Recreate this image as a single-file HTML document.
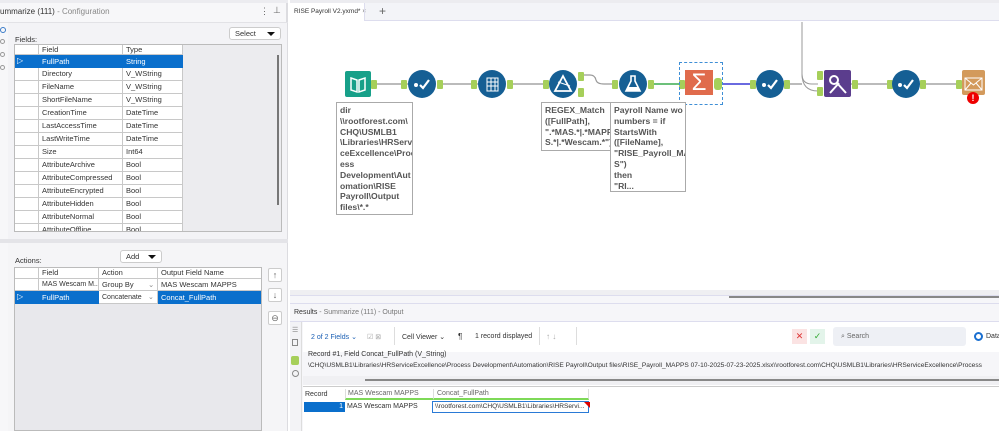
<!DOCTYPE html>
<html><head><meta charset="utf-8"><style>
*{box-sizing:border-box;margin:0;padding:0}
body{width:999px;height:431px;overflow:hidden;background:#fff;font-family:"Liberation Sans",sans-serif;font-size:8px;color:#333;position:relative}
.a{position:absolute}
.cell{position:absolute;border-right:1px solid #c8c8c8;border-bottom:1px solid #c8c8c8;padding-left:3px;line-height:12px;font-size:7.5px;white-space:nowrap;overflow:hidden}
.note{position:absolute;border:1px solid #aaa;background:#fff;color:#555;font-weight:bold;font-size:8.6px;line-height:10.8px;padding:2px 3px;overflow:hidden;white-space:nowrap}
.dd{position:absolute;border:1px solid #ccc;border-radius:3px;background:#fff;font-size:7.5px;padding-left:5px;line-height:12px}
.dd:after{content:"";position:absolute;right:5px;top:4px;border:4px solid transparent;border-top:4px solid #111}
.btn{position:absolute;width:14px;height:14px;border:1px solid #ccc;border-radius:2px;background:#fff;font-size:9px;text-align:center;line-height:12px;color:#666}
.conn{position:absolute;width:6px;height:9px;background:#a6cf5a;border-radius:1px}
.line{position:absolute;height:2px;background:#bbb}
.circ{position:absolute;width:28px;height:28px;border-radius:50%;background:#155f94}
</style></head><body>
<div class="a" style="left:0;top:0;width:288px;height:431px;background:#f7f7f9;border-right:2px solid #dcdce0"></div>
<div class="a" style="left:0;top:0;width:288px;height:3px;background:#ececf0"></div>
<div class="a" style="left:0;top:7px;font-size:8px;color:#333">ummarize (111) <span style="color:#888">- Configuration</span></div>
<div class="a" style="left:260px;top:6px;color:#666;font-size:9px">⋮</div>
<div class="a" style="left:273px;top:5px;color:#666;font-size:9px">⊥</div>
<div class="a" style="left:0;top:22px;width:288px;height:1px;background:#e2e2e6"></div>
<div class="a" style="left:8px;top:23px;width:279px;height:216px;background:#f3f3f6"></div>
<div class="a" style="left:0;top:27px;width:6px;height:6px;border:1px solid #3a7bc8;border-radius:50%"></div>
<div class="a" style="left:0;top:39px;width:5px;height:5px;border:1px solid #999;border-radius:50%"></div>
<div class="a" style="left:0;top:52px;width:5px;height:5px;border:1px solid #999;border-radius:50%"></div>
<div class="a" style="left:0;top:65px;width:5px;height:5px;border:1px solid #999;border-radius:50%"></div>
<div class="a" style="left:15px;top:35px;font-size:7.5px">Fields:</div>
<div class="dd" style="left:229px;top:27px;width:52px;height:13px">Select</div>
<div class="a" style="left:14px;top:44px;width:268px;height:188px;background:#e6e6ea;border:1px solid #bbb;overflow:hidden">
<div class="a" style="left:168px;top:0;width:100px;height:188px;background:#ececef"></div>
<div class="a" style="left:262px;top:10px;width:2px;height:150px;background:#777"></div>
<div class="a" style="left:0;top:0;width:168px;height:188px;background:#fff"></div>
<div class="cell" style="left:0;top:0;width:24px;height:10px"></div>
<div class="cell" style="left:24px;top:0;width:84px;height:10px;line-height:9px">Field</div>
<div class="cell" style="left:108px;top:0;width:60px;height:10px;line-height:9px">Type</div>
<div class="a" style="left:0;top:10px;width:168px;height:13px;background:#0a6fcc"></div>
<div class="a" style="left:2px;top:11px;color:#fff;font-size:8px">▷</div>
<div class="a" style="left:27px;top:10px;color:#fff;line-height:13px;font-size:7.5px">FullPath</div>
<div class="a" style="left:111px;top:10px;color:#fff;line-height:13px;font-size:7.5px">String</div>
<div id="rows"></div>
</div>
<script>
var f=[["Directory","V_WString"],["FileName","V_WString"],["ShortFileName","V_WString"],["CreationTime","DateTime"],["LastAccessTime","DateTime"],["LastWriteTime","DateTime"],["Size","Int64"],["AttributeArchive","Bool"],["AttributeCompressed","Bool"],["AttributeEncrypted","Bool"],["AttributeHidden","Bool"],["AttributeNormal","Bool"],["AttributeOffline","Bool"]];
var h="";f.forEach(function(r,i){var t=23+i*13;h+='<div class="cell" style="left:0;top:'+t+'px;width:24px;height:13px"></div><div class="cell" style="left:24px;top:'+t+'px;width:84px;height:13px">'+r[0]+'</div><div class="cell" style="left:108px;top:'+t+'px;width:60px;height:13px">'+r[1]+'</div>';});
document.getElementById("rows").innerHTML=h;
</script>
<div class="a" style="left:0;top:239px;width:288px;height:4px;background:#e4e4e8"></div>
<div class="a" style="left:8px;top:243px;width:279px;height:188px;background:#f5f5f7"></div>
<div class="a" style="left:15px;top:256px;font-size:7.5px">Actions:</div>
<div class="dd" style="left:120px;top:250px;width:42px;height:13px">Add</div>
<div class="a" style="left:14px;top:267px;width:248px;height:164px;background:#e8e8ec;border:1px solid #bbb;overflow:hidden">
<div class="cell" style="left:0;top:0;width:24px;height:11px;background:#fff"></div>
<div class="cell" style="left:24px;top:0;width:60px;height:11px;background:#fff;line-height:10px">Field</div>
<div class="cell" style="left:84px;top:0;width:59px;height:11px;background:#fff;line-height:10px">Action</div>
<div class="cell" style="left:143px;top:0;width:104px;height:11px;background:#fff;line-height:10px">Output Field Name</div>
<div class="cell" style="left:0;top:11px;width:24px;height:12px;background:#fff"></div>
<div class="cell" style="left:24px;top:11px;width:60px;height:12px;background:#fff;font-size:7px">MAS Wescam M...</div>
<div class="cell" style="left:84px;top:11px;width:59px;height:12px;background:#fff">Group By <span style="position:absolute;left:49px;color:#888">⌄</span></div>
<div class="cell" style="left:143px;top:11px;width:104px;height:12px;background:#fff">MAS Wescam MAPPS</div>
<div class="a" style="left:0;top:23px;width:248px;height:13px;background:#0a6fcc"></div>
<div class="a" style="left:2px;top:24px;color:#fff">▷</div>
<div class="a" style="left:27px;top:23px;color:#fff;line-height:13px;font-size:7.5px">FullPath</div>
<div class="cell" style="left:84px;top:23px;width:59px;height:13px;background:#fff;line-height:13px;font-size:7px">Concatenate <span style="position:absolute;left:49px;color:#888">⌄</span></div>
<div class="a" style="left:146px;top:23px;color:#fff;line-height:13px;font-size:7.5px">Concat_FullPath</div>
</div>
<div class="btn" style="left:268px;top:268px">↑</div>
<div class="btn" style="left:268px;top:288px">↓</div>
<div class="btn" style="left:268px;top:311px">⊖</div>

<div class="a" style="left:290px;top:0;width:709px;height:3px;background:#ececf0"></div>
<div class="a" style="left:290px;top:3px;width:709px;height:18px;background:#f3f4f8;border-bottom:1px solid #dde"></div>
<div class="a" style="left:290px;top:3px;width:74px;height:19px;background:#fff;font-size:6.5px;padding:5px 0 0 4px;white-space:nowrap">RISE Payroll V2.yxmd* <span style="color:#666">×</span></div>
<div class="a" style="left:364px;top:3px;width:1px;height:18px;background:#dde"></div>
<div class="a" style="left:379px;top:4px;font-size:12px;color:#666">+</div>
<svg class="a" style="left:290px;top:22px" width="709" height="275">
<path d="M512 -22 L512 52 Q512 62 522 62 L528 62" fill="none" stroke="#999" stroke-width="1"/>
<path d="M512 52 Q512 69 528 69" fill="none" stroke="#999" stroke-width="1"/>
<path d="M294 53 L300 53 Q305 53 306 58 Q307 62 314 62 L322 62" fill="none" stroke="#999" stroke-width="1.2"/>
</svg>
<div class="line" style="left:372px;top:83px;width:40px"></div>
<div class="line" style="left:437px;top:83px;width:44px"></div>
<div class="line" style="left:507px;top:83px;width:44px"></div>
<div class="a" style="left:648px;top:83px;width:34px;height:2px;background:#6cc07a"></div>
<div class="a" style="left:723px;top:83px;width:34px;height:2px;background:#6a6ae0"></div>
<div class="line" style="left:784px;top:83px;width:18px"></div>
<div class="line" style="left:851px;top:83px;width:42px"></div>
<div class="line" style="left:919px;top:83px;width:44px"></div>
<div class="conn" style="left:371px;top:80px"></div><div class="conn" style="left:401px;top:80px"></div>
<div class="conn" style="left:437px;top:80px"></div><div class="conn" style="left:471px;top:80px"></div>
<div class="conn" style="left:507px;top:80px"></div><div class="conn" style="left:543px;top:80px"></div>
<div class="conn" style="left:578px;top:72px"></div><div class="conn" style="left:578px;top:88px"></div>
<div class="conn" style="left:612px;top:80px"></div><div class="conn" style="left:648px;top:80px"></div>
<div class="conn" style="left:679px;top:80px"></div><div class="conn" style="left:714px;top:78px;width:8px;height:12px;border-radius:3px"></div>
<div class="conn" style="left:750px;top:80px"></div><div class="conn" style="left:784px;top:80px"></div>
<div class="conn" style="left:817px;top:71px"></div><div class="conn" style="left:817px;top:87px"></div>
<div class="conn" style="left:852px;top:80px"></div><div class="conn" style="left:887px;top:80px"></div>
<div class="conn" style="left:920px;top:80px"></div><div class="conn" style="left:956px;top:80px"></div>
<div class="a" style="left:345px;top:71px;width:26px;height:26px;background:#17a089;border-radius:2px"></div>
<svg class="a" style="left:345px;top:71px" width="26" height="26"><path d="M6 7 L12 9 L12 21 L6 19Z M14 9 L20 7 L20 19 L14 21Z" fill="none" stroke="#fff" stroke-width="1.5"/></svg>
<div class="circ" style="left:408px;top:70px"></div>
<div class="circ" style="left:478px;top:70px"></div>
<div class="circ" style="left:549px;top:70px"></div>
<div class="circ" style="left:619px;top:70px"></div>
<div class="circ" style="left:756px;top:70px"></div>
<div class="circ" style="left:892px;top:70px"></div>
<svg class="a" style="left:408px;top:70px" width="28" height="28"><circle cx="8" cy="15" r="2" fill="#fff"/><path d="M12 15 L15 18 L21 10" stroke="#fff" stroke-width="2.2" fill="none"/></svg>
<svg class="a" style="left:756px;top:70px" width="28" height="28"><circle cx="8" cy="15" r="2" fill="#fff"/><path d="M12 15 L15 18 L21 10" stroke="#fff" stroke-width="2.2" fill="none"/></svg>
<svg class="a" style="left:892px;top:70px" width="28" height="28"><circle cx="8" cy="15" r="2" fill="#fff"/><path d="M12 15 L15 18 L21 10" stroke="#fff" stroke-width="2.2" fill="none"/></svg>
<svg class="a" style="left:478px;top:70px" width="28" height="28"><path d="M9 8 H20 V21 H9Z M9 12 H20 M9 16 H20 M13 8 V21 M17 8 V21" stroke="#fff" fill="none" stroke-width="1"/></svg>
<svg class="a" style="left:549px;top:70px" width="28" height="28"><path d="M14 6 L22 21 H6Z" stroke="#fff" fill="none" stroke-width="1.8"/><path d="M9 12 L21 16" stroke="#fff"/></svg>
<svg class="a" style="left:619px;top:70px" width="28" height="28"><path d="M12 6 H16 V11 L21 21 H7 L12 11Z" stroke="#fff" fill="none" stroke-width="1.6"/><path d="M9 17 H19 L21 21 H7Z" fill="#fff"/></svg>
<div class="a" style="left:679px;top:62px;width:44px;height:43px;border:1px dashed #3f8fd6"></div>
<div class="a" style="left:685px;top:70px;width:28px;height:25px;background:#e06b4c;color:#fff;font-size:24px;line-height:25px;text-align:center">Σ</div>
<div class="a" style="left:824px;top:70px;width:27px;height:27px;background:#5b3d8d;border-radius:2px"></div>
<svg class="a" style="left:824px;top:70px" width="27" height="27"><circle cx="10" cy="10" r="4" stroke="#fff" fill="none" stroke-width="2"/><path d="M13 13 L22 23 M6 23 L15 13" stroke="#fff" stroke-width="2"/></svg>
<div class="a" style="left:962px;top:70px;width:23px;height:25px;background:#d39a5c;border-radius:2px"></div>
<svg class="a" style="left:962px;top:70px" width="23" height="25"><path d="M3 8 H20 V20 H3Z M3 8 L11.5 15 L20 8 M3 20 L9 13 M20 20 L14 13" stroke="#fff" fill="none"/></svg>
<div class="a" style="left:967px;top:92px;width:12px;height:12px;border-radius:50%;background:#e00;color:#fff;font-weight:bold;font-size:9px;text-align:center;line-height:12px">!</div>
<div class="note" style="left:336px;top:102px;width:77px;height:113px">dir<br>\\rootforest.com\<br>CHQ\USMLB1<br>\Libraries\HRServi<br>ceExcellence\Proc<br>ess<br>Development\Aut<br>omation\RISE<br>Payroll\Output<br>files\*.*</div>
<div class="note" style="left:541px;top:102px;width:72px;height:49px">REGEX_Match<br>([FullPath],<br>".*MAS.*|.*MAPP<br>S.*|.*Wescam.*")</div>
<div class="note" style="left:610px;top:102px;width:76px;height:90px">Payroll Name wo<br>numbers = if<br>StartsWith<br>([FileName],<br>"RISE_Payroll_MA<br>S")<br>then<br>"RI...</div>

<div class="a" style="left:290px;top:290px;width:709px;height:141px;background:#f6f6f9"></div>
<div class="a" style="left:290px;top:290px;width:709px;height:6px;background:#efeff2;border-bottom:1px solid #dde"></div>
<div class="a" style="left:729px;top:296px;width:270px;height:2px;background:#888"></div>
<div class="a" style="left:290px;top:303px;width:709px;height:1px;background:#dde"></div>
<div class="a" style="left:294px;top:309px;font-size:7px;color:#333">Results <span style="color:#777">- Summarize (111) - Output</span></div>
<div class="a" style="left:290px;top:321px;width:709px;height:1px;background:#dde"></div>
<div class="a" style="left:290px;top:322px;width:12px;height:109px;background:#f3f3f6;border-right:1px solid #ddd"></div>
<div class="a" style="left:292px;top:326px;font-size:7px;color:#888">☰</div>
<div class="a" style="left:292px;top:339px;width:6px;height:7px;border:1px solid #888"></div>
<div class="a" style="left:291px;top:356px;width:8px;height:9px;background:#a6cf5a;border-radius:2px"></div>
<div class="a" style="left:292px;top:370px;width:7px;height:7px;border:1px solid #888;border-radius:50%"></div>
<div class="a" style="left:303px;top:322px;width:696px;height:30px;background:#fff"></div>
<div class="a" style="left:311px;top:333px;font-size:7px;color:#1a5fb4">2 of 2 Fields ⌄</div>
<div class="a" style="left:367px;top:333px;font-size:7px;color:#aaa">☑ ⊠</div>
<div class="a" style="left:394px;top:327px;width:1px;height:18px;background:#ddd"></div>
<div class="a" style="left:402px;top:333px;font-size:7px">Cell Viewer ⌄</div>
<div class="a" style="left:458px;top:332px;font-size:8px">¶</div>
<div class="a" style="left:475px;top:333px;font-size:7px">1 record displayed</div>
<div class="a" style="left:539px;top:327px;width:1px;height:18px;background:#ddd"></div>
<div class="a" style="left:546px;top:332px;font-size:8px;color:#aaa">↑ ↓</div>
<div class="a" style="left:576px;top:327px;width:1px;height:18px;background:#ddd"></div>
<div class="a" style="left:792px;top:329px;width:15px;height:15px;background:#fbe3e3;color:#d33;text-align:center;line-height:15px;font-size:9px">✕</div>
<div class="a" style="left:810px;top:329px;width:15px;height:15px;background:#e3f4ea;color:#3a3;text-align:center;line-height:15px;font-size:9px">✓</div>
<div class="a" style="left:833px;top:327px;width:133px;height:19px;background:#eef0f5;border-radius:3px;font-size:7px;color:#666;padding:6px 0 0 8px">⌕ Search</div>
<div class="a" style="left:974px;top:332px;width:9px;height:9px;border:2px solid #1a6fd0;border-radius:50%"></div>
<div class="a" style="left:986px;top:333px;font-size:7px">Data</div>
<div class="a" style="left:308px;top:351px;font-size:7px">Record #1, Field Concat_FullPath (V_String)</div>
<div class="a" style="left:308px;top:362px;font-size:6.6px;white-space:nowrap">\CHQ\USMLB1\Libraries\HRServiceExcellence\Process Development\Automation\RISE Payroll\Output files\RISE_Payroll_MAPPS 07-10-2025-07-23-2025.xlsx\\rootforest.com\CHQ\USMLB1\Libraries\HRServiceExcellence\Process</div>
<div class="a" style="left:303px;top:376px;width:696px;height:9px;background:#f0f0f3"></div>
<div class="a" style="left:365px;top:379px;width:634px;height:2px;background:#888"></div>
<div class="a" style="left:303px;top:385px;width:696px;height:46px;background:#fff"></div>
<div class="a" style="left:303px;top:386px;width:696px;height:1px;background:#ccc"></div>
<div class="a" style="left:305px;top:391px;font-size:7px">Record</div>
<div class="a" style="left:345px;top:389px;width:88px;height:11px;border-left:1px solid #ddd;border-bottom:2px solid #7ed957;font-size:7px;color:#666;padding-left:2px;line-height:10px">MAS Wescam MAPPS</div>
<div class="a" style="left:433px;top:389px;width:156px;height:11px;border-left:1px solid #ddd;border-right:1px solid #ddd;border-bottom:2px solid #7ed957;font-size:7px;color:#666;padding-left:3px;line-height:10px">Concat_FullPath</div>
<div class="a" style="left:304px;top:402px;width:41px;height:10px;background:#0a6fcc;color:#fff;font-size:7px;text-align:right;padding-right:2px;line-height:10px">1</div>
<div class="a" style="left:347px;top:402px;font-size:7px;line-height:10px">MAS Wescam MAPPS</div>
<div class="a" style="left:432px;top:401px;width:157px;height:12px;border:1px solid #2a7ad6;font-size:6.6px;line-height:10px;padding-left:2px;overflow:hidden;white-space:nowrap">\\rootforest.com\CHQ\USMLB1\Libraries\HRServi...</div>
<div class="a" style="left:584px;top:402px;border:3px solid transparent;border-top:3px solid #d00;border-right:3px solid #d00"></div>
</body></html>
